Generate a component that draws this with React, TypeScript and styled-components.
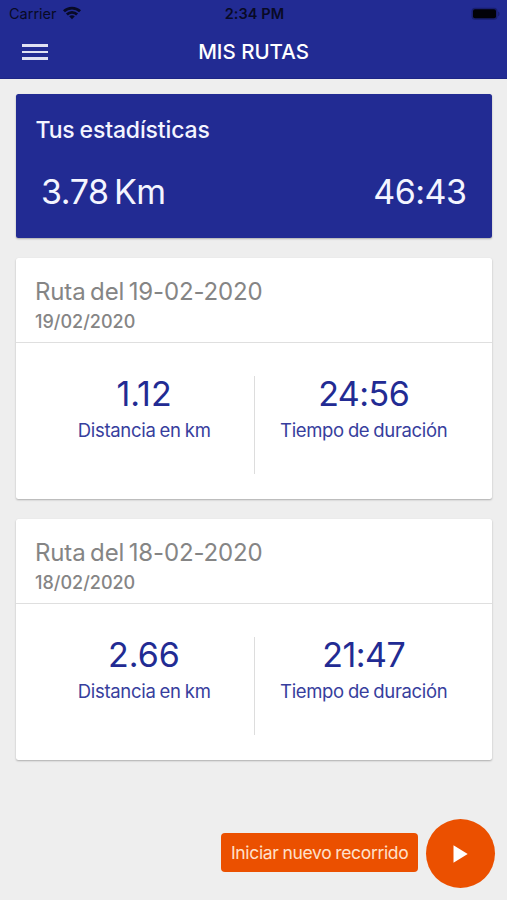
import React from "react";
import styled, { createGlobalStyle } from "styled-components";

const BLUE = "#222b93";
const ORANGE = "#eb5000";

const GlobalStyle = createGlobalStyle`
  * { box-sizing: border-box; }
  body {
    margin: 0;
    background: #eeeeee;
    font-family: Inter, "Liberation Sans", sans-serif;
  }
`;

const Label = styled.span<{ $size: number; $weight?: number; $spacing?: number; $word?: number }>`
  display: block;
  white-space: nowrap;
  font-size: ${(p) => p.$size}px;
  font-weight: ${(p) => p.$weight ?? 400};
  letter-spacing: ${(p) => p.$spacing ?? 0}px;
  word-spacing: ${(p) => p.$word ?? 0}px;
  margin-right: ${(p) => p.$spacing ?? 0}px;
`;

const Screen = styled.div`
  position: relative;
  display: flex;
  flex-direction: column;
  width: 507px;
  height: 900px;
  overflow: hidden;
  background: #eeeeee;
`;

const Header = styled.header`
  flex: none;
  height: 79px;
  background: ${BLUE};
  border-bottom: 1px solid #1d2585;
`;

const StatusBar = styled.div`
  display: grid;
  grid-template-columns: 1fr auto 1fr;
  align-items: center;
  height: 27px;
  padding: 0 7px 0 9px;
  color: #080a25;
  line-height: 27px;
`;

const Carrier = styled.div`
  display: flex;
  align-items: center;
  gap: 6px;
`;

const WifiIcon = styled.svg`
  margin-top: -2px;
`;

const Battery = styled.svg`
  justify-self: end;
`;

const NavBar = styled.div`
  display: grid;
  grid-template-columns: 1fr auto 1fr;
  align-items: center;
  height: 50px;
  padding: 0 22px;
  color: #fff;
  line-height: 50px;
`;

const MenuButton = styled.button`
  display: flex;
  flex-direction: column;
  gap: 4px;
  width: 26px;
  padding: 0;
  border: 0;
  background: none;
`;

const MenuLine = styled.span`
  height: 2.6px;
  background: #e0e1f3;
`;

const Content = styled.main`
  display: flex;
  flex-direction: column;
  gap: 20px;
  padding: 15px 15px 0 16px;
`;

const Card = styled.section`
  border-radius: 2.5px;
  background: #fff;
  box-shadow: 0 1px 2px rgba(0, 0, 0, 0.28);
`;

const Summary = styled(Card)`
  height: 144px;
  margin-left: -0.5px;
  padding: 21px 26px 0 20px;
  color: #f4f5ff;
  background: ${BLUE};
`;

const SummaryTitle = styled.div`
  height: 30px;
  line-height: 30px;
`;

const SummaryValues = styled.div`
  display: flex;
  justify-content: space-between;
  margin: 26px 0 0 5.5px;
  line-height: 42px;
`;

const Route = styled(Card)`
  height: 241px;
`;

const RouteHeader = styled.header`
  height: 85px;
  padding: 18px 19px 0;
  border-bottom: 1px solid #dfdfdf;
  color: #858585;
  line-height: 32px;
`;

const RouteDate = styled.div`
  height: 26px;
  line-height: 27px;
`;

const RouteBody = styled.div`
  display: grid;
  grid-template-columns: 238px 1px 1fr;
  padding-top: 33px;
`;

const Divider = styled.div`
  height: 98px;
  background: #dddddd;
`;

const Metric = styled.div<{ $side: "left" | "right" }>`
  display: flex;
  flex-direction: column;
  align-items: center;
  padding-${(p) => p.$side}: ${(p) => (p.$side === "left" ? 18 : 20)}px;
  color: ${BLUE};
`;

const MetricValue = styled.div`
  height: 36px;
  line-height: 36px;
`;

const MetricCaption = styled.div`
  height: 36px;
  color: #373e9d;
  line-height: 36px;
`;

const Actions = styled.div`
  position: absolute;
  right: 12px;
  bottom: 12px;
  display: flex;
  align-items: center;
  gap: 8px;
`;

const ActionLabel = styled.div`
  display: flex;
  align-items: center;
  justify-content: center;
  width: 197px;
  height: 39px;
  margin-bottom: 2px;
  border-radius: 4px;
  color: #ffe0cb;
  background: ${ORANGE};
`;

const PlayButton = styled.button`
  display: flex;
  align-items: center;
  justify-content: center;
  width: 69px;
  height: 69px;
  padding: 0;
  border: 0;
  border-radius: 50%;
  background: ${ORANGE};
`;

const routes = [
  { title: "Ruta del 19-02-2020", date: "19/02/2020", km: "1.12", time: "24:56" },
  { title: "Ruta del 18-02-2020", date: "18/02/2020", km: "2.66", time: "21:47" },
];

export default function App() {
  return (
    <Screen>
      <GlobalStyle />
      <Header>
        <StatusBar>
          <Carrier>
            <Label $size={14.5}>Carrier</Label>
            <WifiIcon width="18" height="14" viewBox="0 0 19 14" fill="none" stroke="#080a25" strokeWidth="2.9">
              <path d="M1 5.2C5.7.6 13.3.6 18 5.2" />
              <path d="M4.1 8.5c3-3 7.8-3 10.8 0" />
              <path d="M9.5 13.5 6.5 10.5q3-2.2 6 0z" fill="#080a25" stroke="none" />
            </WifiIcon>
          </Carrier>
          <Label $size={14.5} $weight={600} $spacing={0.1}>2:34 PM</Label>
          <Battery width="29" height="14" viewBox="0 0 29 14">
            <rect x="0.5" y="0.8" width="26" height="12" rx="3.5" fill="#191f70" />
            <rect x="2" y="2.3" width="23" height="9" rx="2" fill="#020208" />
            <path d="M27 4.5q1.6.5 1.6 2.4T27 9.3z" fill="#191f70" />
          </Battery>
        </StatusBar>
        <NavBar>
          <MenuButton aria-label="Menu">
            <MenuLine />
            <MenuLine />
            <MenuLine />
          </MenuButton>
          <Label $size={20.5} $weight={500}>MIS RUTAS</Label>
        </NavBar>
      </Header>
      <Content>
        <Summary>
          <SummaryTitle>
            <Label $size={23} $weight={500} $spacing={-0.15} $word={-1}>Tus estadísticas</Label>
          </SummaryTitle>
          <SummaryValues>
            <Label $size={34} $spacing={-0.4} $word={-4}>3.78 Km</Label>
            <Label $size={34} $spacing={-0.5}>46:43</Label>
          </SummaryValues>
        </Summary>
        {routes.map((r) => (
          <Route key={r.date}>
            <RouteHeader>
              <Label $size={24} $spacing={-0.15} $word={-2}>{r.title}</Label>
              <RouteDate>
                <Label $size={18} $weight={500}>{r.date}</Label>
              </RouteDate>
            </RouteHeader>
            <RouteBody>
              <Metric $side="left">
                <MetricValue><Label $size={34}>{r.km}</Label></MetricValue>
                <MetricCaption><Label $size={18.5} $spacing={-0.3} $word={-0.8}>Distancia en km</Label></MetricCaption>
              </Metric>
              <Divider />
              <Metric $side="right">
                <MetricValue><Label $size={34} $spacing={-0.5}>{r.time}</Label></MetricValue>
                <MetricCaption><Label $size={18.5} $spacing={-0.35} $word={-0.8}>Tiempo de duración</Label></MetricCaption>
              </Metric>
            </RouteBody>
          </Route>
        ))}
      </Content>
      <Actions>
        <ActionLabel><Label $size={17.5} $spacing={-0.33} $word={-0.7}>Iniciar nuevo recorrido</Label></ActionLabel>
        <PlayButton aria-label="Iniciar">
          <svg width="17" height="20" viewBox="0 0 17 20">
            <path d="M1.5 1.3 15.7 10 1.5 18.7z" fill="#fff" />
          </svg>
        </PlayButton>
      </Actions>
    </Screen>
  );
}
